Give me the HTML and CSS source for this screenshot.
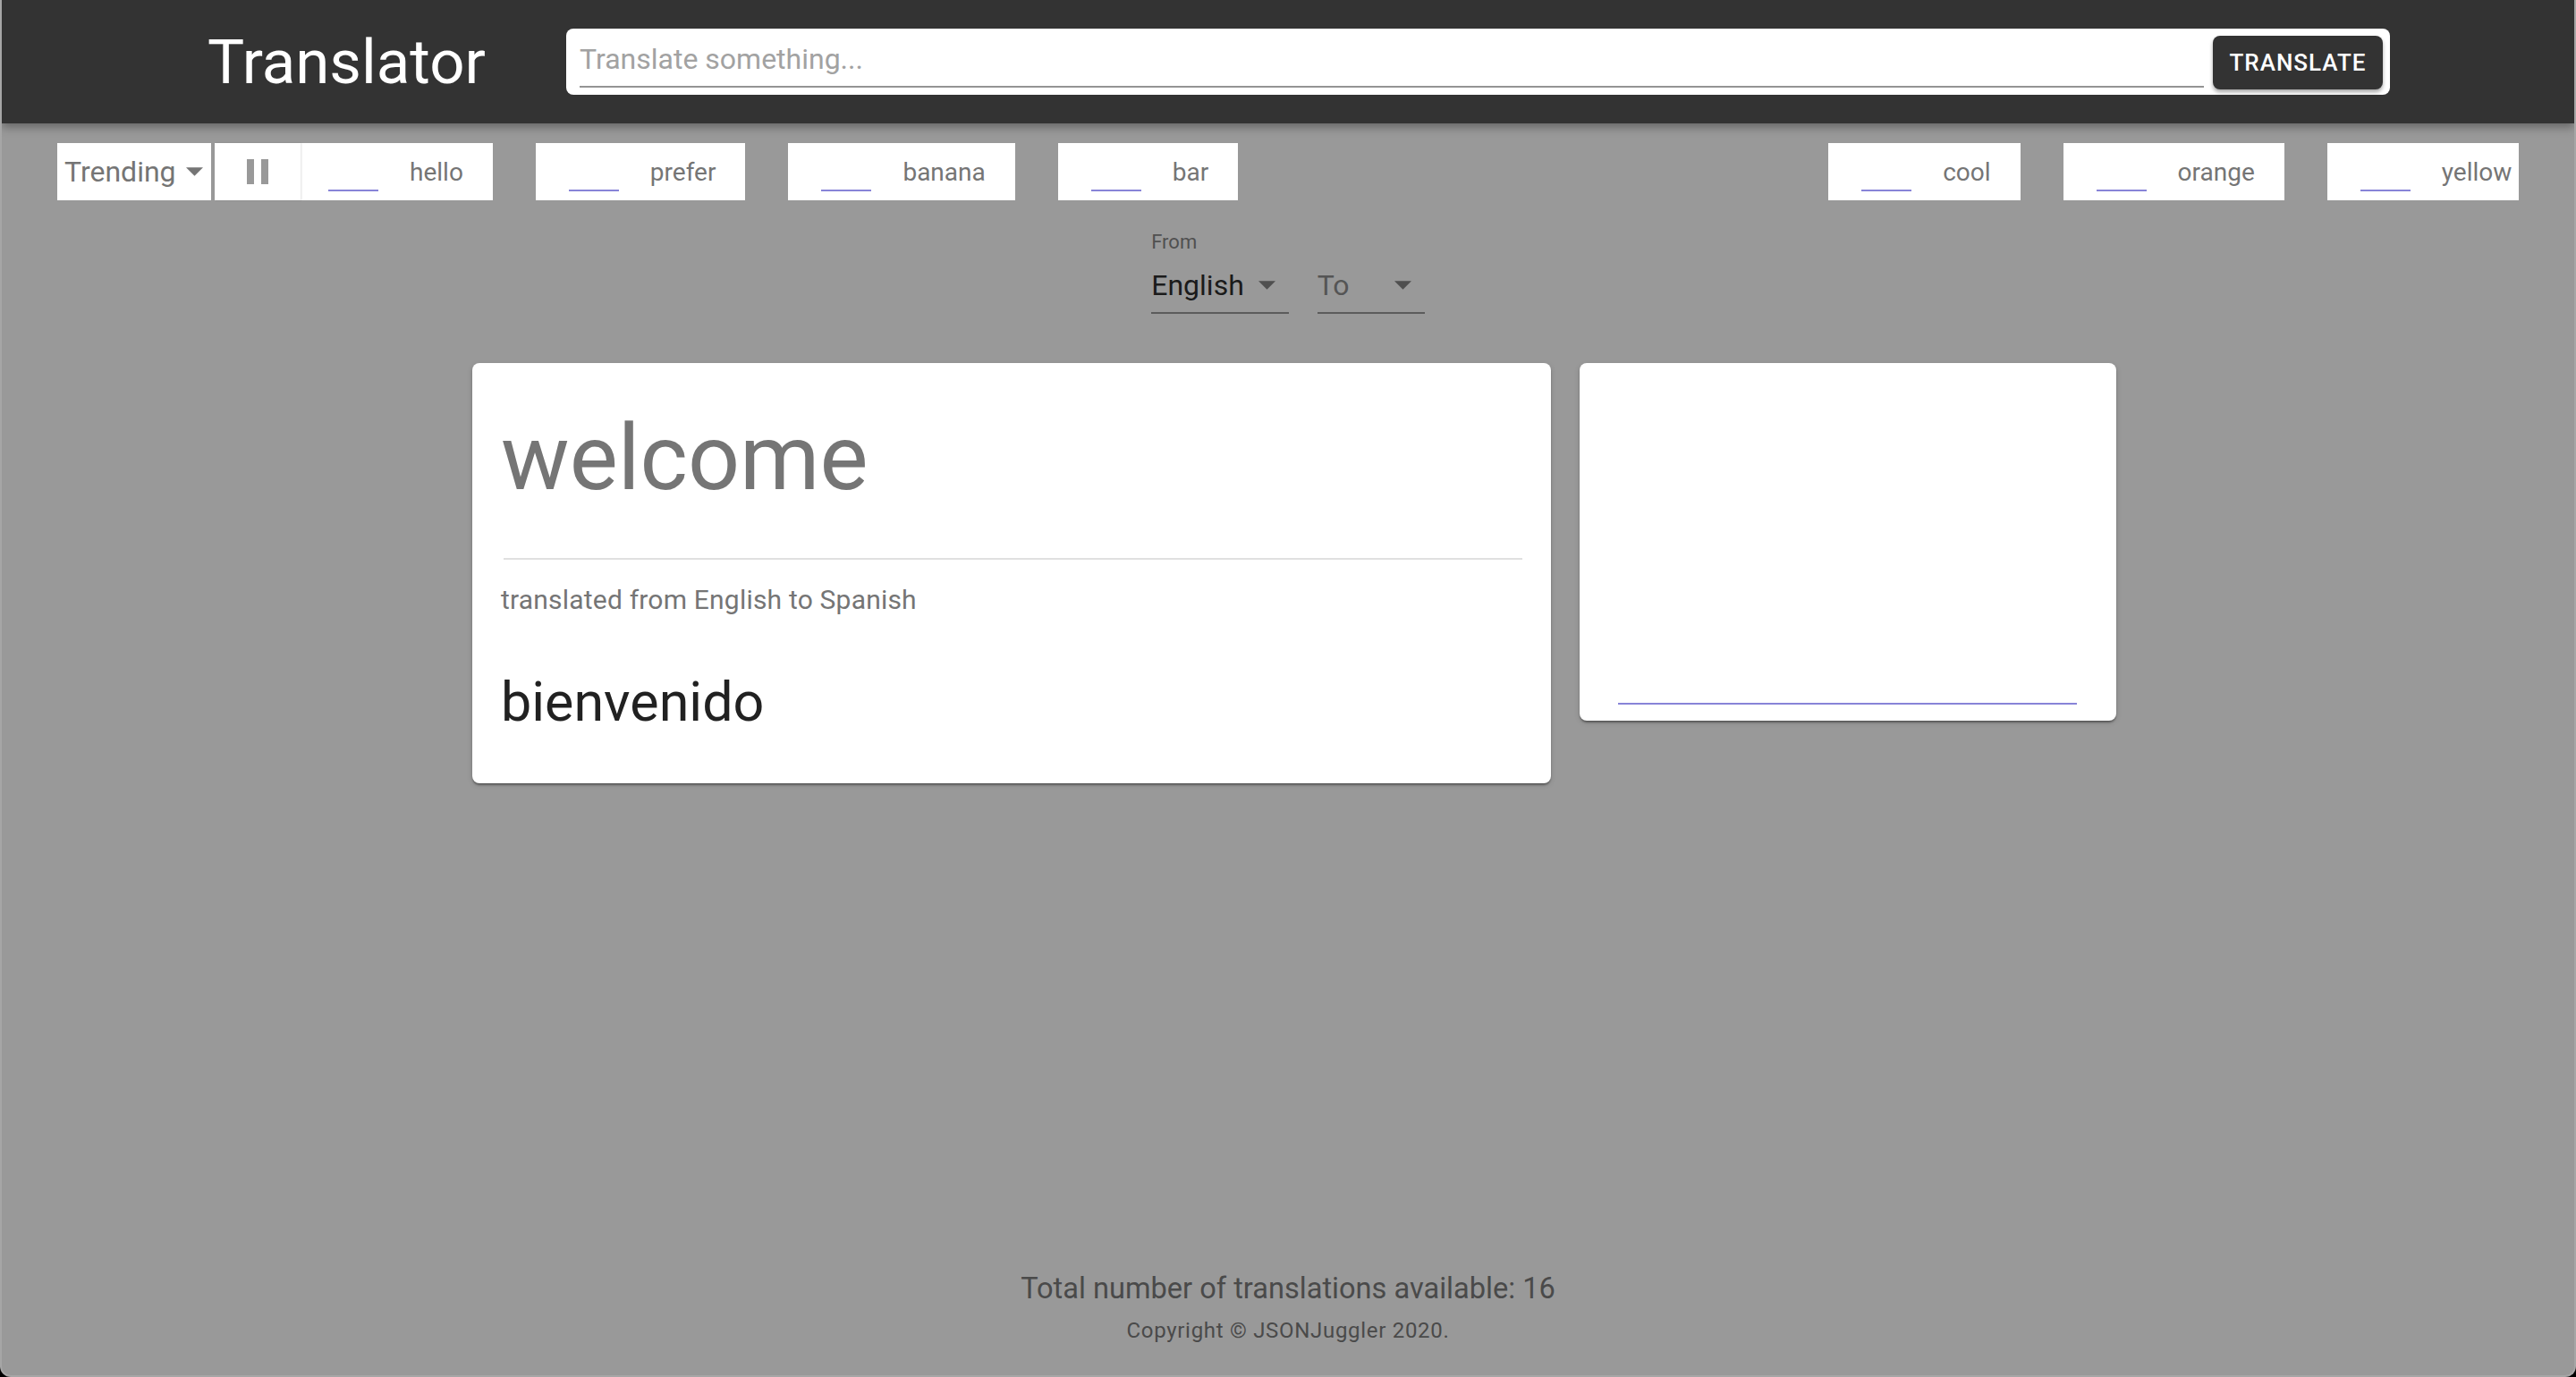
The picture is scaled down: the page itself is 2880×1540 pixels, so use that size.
FILE: index.html
```html
<!DOCTYPE html>
<html lang="en">
<head>
<meta charset="utf-8">
<title>Translator</title>
<link rel="stylesheet" href="styles.css">
</head>
<body>
<header class="appbar">
  <h1 class="brand">Translator</h1>
  <form class="search">
    <div class="search-field"><span class="placeholder">Translate something...</span></div>
    <button type="button" class="btn-translate">Translate</button>
  </form>
</header>

<section class="trending">
  <div class="trend-select">
    <span>Trending</span>
    <svg class="caret" width="19" height="10" viewBox="0 0 10 5"><path d="M0 0l5 5 5-5z"/></svg>
  </div>
  <button type="button" class="pause" aria-label="pause">
    <span class="pause-bar"></span><span class="pause-bar"></span>
  </button>
  <div class="ticker">
    <div class="chip chip-first"><span class="chip-line"></span><span class="chip-word">hello</span></div>
    <div class="chip"><span class="chip-line"></span><span class="chip-word">prefer</span></div>
    <div class="chip"><span class="chip-line"></span><span class="chip-word">banana</span></div>
    <div class="chip chip-break"><span class="chip-line"></span><span class="chip-word">bar</span></div>
    <div class="chip"><span class="chip-line"></span><span class="chip-word">cool</span></div>
    <div class="chip"><span class="chip-line"></span><span class="chip-word">orange</span></div>
    <div class="chip"><span class="chip-line"></span><span class="chip-word">yellow</span></div>
  </div>
</section>

<section class="langs">
  <div class="lang-field">
    <span class="lang-label">From</span>
    <div class="lang-select">
      <span>English</span>
      <svg class="lang-caret" width="19" height="10" viewBox="0 0 10 5"><path d="M0 0l5 5 5-5z"/></svg>
    </div>
  </div>
  <div class="lang-field">
    <div class="lang-select lang-empty">
      <span>To</span>
      <svg class="lang-caret" width="19" height="10" viewBox="0 0 10 5"><path d="M0 0l5 5 5-5z"/></svg>
    </div>
  </div>
</section>

<main class="cards">
  <article class="card card-main">
    <h2 class="word">welcome</h2>
    <div class="divider"></div>
    <p class="meta">translated from English to Spanish</p>
    <p class="result">bienvenido</p>
  </article>
  <article class="card card-side">
    <div class="card-line"></div>
  </article>
</main>

<footer class="footer">
  <p class="total">Total number of translations available: 16</p>
  <p class="copy">Copyright © JSONJuggler 2020.</p>
</footer>
</body>
</html>
```

FILE: styles.css
```css
html {
  background: #000;
}

body {
  margin: 0;
  min-height: 100vh;
  box-sizing: border-box;
  background: #999999;
  border: 2px solid #a6a6a6;
  border-top: 0;
  border-radius: 0 0 12px 12px;
  overflow: hidden;
  font-family: Roboto, "Noto Sans", sans-serif;
  display: flex;
  flex-direction: column;
}

/* ---------- app bar ---------- */
.appbar {
  height: 138px;
  flex-shrink: 0;
  background: #333333;
  display: flex;
  align-items: flex-start;
  padding-left: 230px;
  box-shadow: 0 4px 10px rgba(0, 0, 0, 0.35);
  position: relative;
  z-index: 2;
}

.brand {
  width: 401px;
  flex-shrink: 0;
  margin: 0;
  align-self: center;
  font-size: 69px;
  font-weight: 400;
  color: #ffffff;
  line-height: normal;
}

.search {
  margin: 32px 0 0 0;
  width: 2039px;
  height: 74px;
  box-sizing: border-box;
  background: #ffffff;
  border-radius: 8px;
  display: flex;
  gap: 10px;
  padding: 8px 8px 8px 15px;
}

.search-field {
  flex: 1;
  border-bottom: 2px solid #949494;
  padding-top: 7px;
}

.placeholder {
  display: block;
  font-size: 32px;
  line-height: 38px;
  color: #a2a2a2;
}

.btn-translate {
  width: 190px;
  height: 60px;
  flex-shrink: 0;
  align-self: flex-start;
  background: #333333;
  color: #ffffff;
  border: 0;
  border-radius: 8px;
  font-family: Roboto, "Noto Sans", sans-serif;
  font-size: 26px;
  font-weight: 500;
  letter-spacing: 1px;
  text-transform: uppercase;
  box-shadow: 0 3px 4px rgba(0, 0, 0, 0.35);
  padding: 0;
}

/* ---------- trending ticker ---------- */
.trending {
  display: flex;
  height: 64px;
  margin-top: 22px;
  padding: 0 62px;
}

.trend-select {
  width: 172px;
  flex-shrink: 0;
  box-sizing: border-box;
  background: #ffffff;
  display: flex;
  align-items: center;
  gap: 11px;
  padding-left: 8px;
  font-size: 32px;
  color: #757575;
}

.caret {
  fill: #757575;
}

.pause {
  width: 96px;
  flex-shrink: 0;
  margin-left: 4px;
  background: #ffffff;
  border: 0;
  padding: 0;
  display: flex;
  align-items: center;
  justify-content: center;
  gap: 8px;
  position: relative;
  z-index: 1;
  box-shadow: 1px 0 2px rgba(0, 0, 0, 0.12);
}

.pause-bar {
  width: 8px;
  height: 28px;
  background: #999999;
}

.ticker {
  flex: 1;
  min-width: 0;
  display: flex;
  gap: 48px;
  overflow: hidden;
}

.chip {
  flex-shrink: 0;
  background: #ffffff;
  display: flex;
  align-items: center;
  padding: 0 33px 0 37px;
}

.chip-first {
  margin-left: -6px;
}

.chip-break {
  margin-right: 612px;
}

.chip-line {
  width: 56px;
  height: 2px;
  background: #8884d8;
  align-self: flex-end;
  margin-bottom: 10px;
  margin-right: 35px;
}

.chip-word {
  font-size: 28px;
  color: #757575;
}

/* ---------- language selects ---------- */
.langs {
  display: flex;
  justify-content: center;
  align-items: flex-end;
  gap: 32px;
  margin-top: 34px;
}

.lang-field {
  display: flex;
  flex-direction: column;
}

.lang-label {
  font-size: 22px;
  line-height: 26px;
  color: #505050;
  margin-bottom: 10px;
}

.lang-select {
  min-width: 120px;
  box-sizing: border-box;
  display: flex;
  align-items: center;
  justify-content: space-between;
  gap: 16px;
  padding: 6px 15px 11px 0;
  border-bottom: 2px solid #5c5c5c;
  font-size: 32px;
  line-height: 38px;
  color: #1b1b1b;
}

.lang-empty {
  color: #555555;
}

.lang-caret {
  fill: #4f4f4f;
}

/* ---------- cards ---------- */
.cards {
  flex: 1;
  display: flex;
  justify-content: center;
  align-items: flex-start;
  gap: 32px;
  margin-top: 55px;
  padding-left: 14px;
}

.card {
  background: #ffffff;
  border-radius: 8px;
  box-sizing: border-box;
  box-shadow: 0 3px 3px -2px rgba(0, 0, 0, 0.3), 0 2px 2px rgba(0, 0, 0, 0.2), 0 2px 6px rgba(0, 0, 0, 0.14);
}

.card-main {
  width: 1206px;
  padding: 45px 32px 55px 32px;
}

.word {
  margin: 0;
  font-size: 102px;
  font-weight: 400;
  line-height: 1.2;
  color: #757575;
}

.divider {
  height: 2px;
  background: #e0e0e0;
  margin-top: 51px;
  margin-left: 3px;
}

.meta {
  margin: 24px 0 0;
  font-size: 30px;
  line-height: 42px;
  letter-spacing: 0.2px;
  color: #757575;
}

.result {
  margin: 57px 0 0;
  font-size: 61px;
  line-height: 72px;
  color: #212121;
}

.card-side {
  width: 600px;
  height: 400px;
  display: flex;
  flex-direction: column;
  justify-content: flex-end;
  padding: 0 44px 18px 43px;
}

.card-line {
  height: 2px;
  background: #8884d8;
}

/* ---------- footer ---------- */
.footer {
  text-align: center;
  padding-bottom: 31px;
}

.total {
  margin: 0;
  font-size: 32.6px;
  line-height: 48px;
  color: #4a4a4a;
}

.copy {
  margin: 4px 0 0;
  font-size: 24px;
  line-height: 38px;
  letter-spacing: 0.7px;
  color: #4a4a4a;
}
```
